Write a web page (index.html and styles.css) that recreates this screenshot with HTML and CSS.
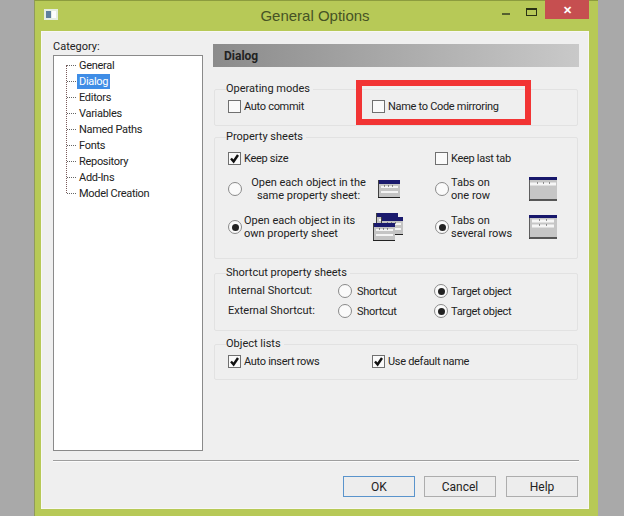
FILE: index.html
```html
<!DOCTYPE html>
<html lang="en">
<head>
    <meta charset="UTF-8">
    <meta name="viewport" content="width=device-width, initial-scale=1.0">
    <title>General Options</title>
    <link rel="stylesheet" href="styles.css">
</head>
<body>
    <svg class="defs" width="0" height="0">
        <symbol id="tick" viewBox="0 0 13 13">
            <path d="M3 6.5l2.6 3L10 3" fill="none" stroke="#111" stroke-width="2.4"/>
        </symbol>
        <symbol id="sheet" viewBox="0 0 22 18">
            <rect x="0" y="0" width="22" height="18" fill="#404040"/>
            <rect x="1" y="0" width="21" height="17" fill="#c4c4c4"/>
            <rect x="1" y="0" width="21" height="4" fill="#1a1a6e"/>
            <path d="M3 7h17M3 12h17" stroke="#f4f4f4" stroke-width="2"/>
            <path d="M6 6h1M10 6h1M14 6h1" stroke="#333"/>
            <path d="M0 17.5h22" stroke="#222"/>
        </symbol>
        <symbol id="tabs-one" viewBox="0 0 28 24">
            <rect x="0" y="0" width="28" height="24" fill="#c6c6c6"/>
            <rect x="0" y="0" width="28" height="3" fill="#17176b"/>
            <path d="M1 7h26" stroke="#f6f6f6" stroke-width="3"/>
            <path d="M8 6h1M14 6h1M20 6h1" stroke="#333"/>
            <path d="M0 3v21h28" fill="none" stroke="#333" stroke-width="1.4"/>
            <path d="M0 22.5h28" stroke="#555"/>
        </symbol>
        <symbol id="tabs-rows" viewBox="0 0 28 24">
            <rect x="0" y="0" width="28" height="24" fill="#c6c6c6"/>
            <rect x="0" y="0" width="28" height="3" fill="#17176b"/>
            <path d="M3 6h22M3 11h22" stroke="#f6f6f6" stroke-width="3"/>
            <path d="M10 5h1M17 5h1M10 10h1M17 10h1" stroke="#333"/>
            <path d="M0 3v21h28" fill="none" stroke="#333" stroke-width="1.4"/>
            <path d="M0 22.5h28" stroke="#555"/>
        </symbol>
    </svg>

    <div class="window">
        <div class="titlebar">
            <svg class="app-icon" width="14" height="11" viewBox="0 0 14 11">
                <rect width="14" height="11" fill="#e6eee0"/>
                <rect x="2" y="2" width="5" height="7" fill="#5e7f9c"/>
                <rect x="8" y="2" width="4" height="7" fill="#fdfdfd"/>
            </svg>
            <div class="title">General Options</div>
            <div class="win-btns">
                <span class="win-min"></span>
                <span class="win-max"></span>
                <span class="win-close">&#10005;</span>
            </div>
        </div>

        <div class="client">
            <div class="columns">
                <div class="left-col">
                    <div class="cat-label">Category:</div>
                    <ul class="tree">
                        <li>General</li>
                        <li class="selected"><span>Dialog</span></li>
                        <li>Editors</li>
                        <li>Variables</li>
                        <li>Named Paths</li>
                        <li>Fonts</li>
                        <li>Repository</li>
                        <li>Add-Ins</li>
                        <li>Model Creation</li>
                    </ul>
                </div>

                <div class="right-col">
                    <div class="page-head">Dialog</div>

                    <fieldset class="group group-modes">
                        <legend>Operating modes</legend>
                        <div class="pair-row">
                            <label class="opt"><span class="check"></span>Auto commit</label>
                            <label class="opt"><span class="check"></span>Name to Code mirroring</label>
                        </div>
                        <div class="highlight"></div>
                    </fieldset>

                    <fieldset class="group group-sheets">
                        <legend>Property sheets</legend>
                        <div class="sheets-grid">
                            <label class="opt"><span class="check"><svg width="13" height="13"><use href="#tick"/></svg></span>Keep size</label>
                            <label class="opt"><span class="check"></span>Keep last tab</label>

                            <div class="sheet-row row-same">
                                <span class="radio"></span>
                                <span class="sheet-text centered">Open each object in the<br>same property sheet:</span>
                                <svg class="ic-same" width="22" height="18"><use href="#sheet"/></svg>
                            </div>
                            <div class="sheet-row tab-row">
                                <span class="radio"></span>
                                <span class="sheet-text">Tabs on<br>one row</span>
                                <svg class="ic-tab" width="28" height="24"><use href="#tabs-one"/></svg>
                            </div>

                            <div class="sheet-row row-own">
                                <span class="radio on"></span>
                                <span class="sheet-text">Open each object in its<br>own property sheet</span>
                                <span class="ic-stack">
                                    <svg width="22" height="18"><use href="#sheet"/></svg>
                                    <svg width="22" height="18"><use href="#sheet"/></svg>
                                    <svg width="22" height="18"><use href="#sheet"/></svg>
                                </span>
                            </div>
                            <div class="sheet-row tab-row">
                                <span class="radio on"></span>
                                <span class="sheet-text">Tabs on<br>several rows</span>
                                <svg class="ic-tab" width="28" height="24"><use href="#tabs-rows"/></svg>
                            </div>
                        </div>
                    </fieldset>

                    <fieldset class="group group-shortcut">
                        <legend>Shortcut property sheets</legend>
                        <div class="shortcut-grid">
                            <span class="sc-label">Internal Shortcut:</span>
                            <label class="opt"><span class="radio"></span>Shortcut</label>
                            <label class="opt"><span class="radio on"></span>Target object</label>
                            <span class="sc-label">External Shortcut:</span>
                            <label class="opt"><span class="radio"></span>Shortcut</label>
                            <label class="opt"><span class="radio on"></span>Target object</label>
                        </div>
                    </fieldset>

                    <fieldset class="group group-lists">
                        <legend>Object lists</legend>
                        <div class="pair-row">
                            <label class="opt"><span class="check"><svg width="13" height="13"><use href="#tick"/></svg></span>Auto insert rows</label>
                            <label class="opt"><span class="check"><svg width="13" height="13"><use href="#tick"/></svg></span>Use default name</label>
                        </div>
                    </fieldset>
                </div>
            </div>

            <div class="separator"></div>

            <div class="buttons">
                <button class="btn default">OK</button>
                <button class="btn">Cancel</button>
                <button class="btn btn-help">Help</button>
            </div>
        </div>
    </div>
</body>
</html>
```

FILE: styles.css
```css
html, body {
    height: 100%;
}
body {
    margin: 0;
    background-color: #a9a9a9;
    font-family: Roboto, "Liberation Sans", Arial, sans-serif;
    font-size: 11px;
    color: #222;
    overflow: hidden;
}
.defs {
    position: absolute;
}
.window {
    box-sizing: border-box;
    width: 564px;
    height: 516px;
    margin-left: 34px;
    background-color: #b7c957;
    border-left: 1px solid #8f9a5c;
    border-top: 1px solid #8c9c3e;
    padding: 0 9px 7px 6px;
    display: flex;
    flex-direction: column;
}
.titlebar {
    height: 30px;
    flex: none;
    display: flex;
    position: relative;
}
.app-icon {
    margin: 8px 0 0 3px;
}
.title {
    position: absolute;
    left: 0;
    right: 0;
    top: 6px;
    text-align: center;
    font-family: "Liberation Sans", Arial, sans-serif;
    font-size: 15px;
    color: #465325;
}
.win-btns {
    margin-left: auto;
    display: flex;
}
.win-min {
    width: 8px;
    height: 2px;
    margin: 12px 0 0 0;
    background-color: #55602f;
}
.win-max {
    box-sizing: border-box;
    width: 11px;
    height: 8px;
    margin: 7px 0 0 16px;
    border: 1px solid #2b3314;
    border-top-width: 2px;
}
.win-close {
    width: 44px;
    height: 19px;
    margin-left: 8px;
    margin-top: -1px;
    background-color: #c64f50;
    color: #fff;
    font-size: 11px;
    font-weight: bold;
    line-height: 22px;
    text-align: center;
}
.client {
    flex: 1;
    background-color: #efefef;
    box-shadow: inset 0 0 0 1px #f7f7f4;
    padding: 13px 10px 0 12px;
    display: flex;
    flex-direction: column;
}
.columns {
    display: flex;
    gap: 10px;
}
.left-col {
    width: 150px;
}
.cat-label {
    height: 11px;
    line-height: 6px;
}
.tree {
    box-sizing: border-box;
    position: relative;
    height: 396px;
    margin: 0;
    padding: 2px 0 0 25px;
    list-style: none;
    background-color: #fff;
    border: 1px solid #8a8a8a;
}
.tree::before {
    content: "";
    position: absolute;
    left: 12px;
    top: 9px;
    height: 128px;
    border-left: 1px dotted #7a5a5a;
}
.tree li {
    position: relative;
    height: 16px;
    line-height: 15px;
    letter-spacing: -0.3px;
}
.tree li::before {
    content: "";
    position: absolute;
    left: -12px;
    top: 7px;
    width: 9px;
    border-top: 1px dotted #666;
}
.tree .selected span {
    display: inline-block;
    margin-left: -2px;
    padding: 0 2px;
    background-color: #3f8de6;
    color: #fff;
}
.right-col {
    width: 366px;
    position: relative;
}
.page-head {
    height: 23px;
    line-height: 24px;
    padding-left: 11px;
    font-size: 12px;
    font-weight: bold;
    color: #222;
    background: linear-gradient(to right, #8b8b8b, #c9c9c9);
}
.group {
    box-sizing: border-box;
    margin: 0 1px;
    padding: 0 0 0 13px;
    min-width: 0;
    border: 1px solid #e2e2e2;
    border-radius: 2px;
}
.group legend {
    padding: 0 3px 0 0;
    margin-left: -2px;
    line-height: 14px;
}
.group-modes {
    position: relative;
    height: 44px;
    margin-top: 15px;
}
.group-sheets {
    height: 129px;
    margin-top: 4px;
}
.group-shortcut {
    height: 65px;
    margin-top: 7px;
}
.group-lists {
    height: 43px;
    margin-top: 6px;
}
.opt {
    display: flex;
    align-items: center;
    gap: 3px;
    height: 14px;
    align-self: start;
    letter-spacing: -0.3px;
}
.check {
    box-sizing: border-box;
    flex: none;
    width: 13px;
    height: 13px;
    background-color: #fafafa;
    border: 1px solid #707070;
    display: flex;
}
.check svg {
    margin: -1px;
    flex: none;
}
.radio {
    box-sizing: border-box;
    flex: none;
    width: 14px;
    height: 14px;
    border-radius: 50%;
    background-color: #fafafa;
    border: 1px solid #8a8a8a;
    position: relative;
}
.radio.on::after {
    content: "";
    position: absolute;
    left: 2.5px;
    top: 2.5px;
    width: 7px;
    height: 7px;
    border-radius: 50%;
    background-color: #222;
}
.pair-row {
    display: grid;
    grid-template-columns: 144px 1fr;
    padding-top: 3px;
}
.highlight {
    position: absolute;
    left: 141px;
    top: -16px;
    width: 175px;
    height: 45px;
    box-sizing: border-box;
    border: 6px solid #f23434;
}
.sheets-grid {
    display: grid;
    grid-template-columns: 207px 1fr;
    grid-template-rows: 19px 38px 38px;
    padding-top: 7px;
}
.sheet-row {
    display: flex;
    align-items: center;
    line-height: 13px;
}
.row-same .sheet-text {
    margin-left: 9px;
    width: 115px;
}
.row-own .sheet-text {
    margin-left: 2px;
    width: 129px;
}
.centered {
    text-align: center;
}
.ic-same {
    margin-left: 12px;
    margin-bottom: 1px;
}
.ic-stack {
    position: relative;
    width: 30px;
    height: 28px;
}
.ic-stack svg {
    position: absolute;
}
.ic-stack svg:nth-child(1) {
    left: 3px;
    top: 0;
}
.ic-stack svg:nth-child(2) {
    left: 8px;
    top: 4px;
}
.ic-stack svg:nth-child(3) {
    left: 0;
    top: 10px;
}
.tab-row .sheet-text {
    margin-left: 2px;
    width: 78px;
}
.shortcut-grid {
    display: grid;
    grid-template-columns: 110px 96px 1fr;
    grid-auto-rows: 20px;
    align-items: center;
    padding-top: 1px;
}
.shortcut-grid .opt {
    gap: 5px;
    align-self: center;
}
.shortcut-grid .opt:nth-child(3n) {
    gap: 3px;
}
.sc-label {
    position: relative;
    top: -1px;
}
.btn {
    box-sizing: border-box;
    width: 72px;
    height: 21px;
    padding: 0;
    border: 1px solid #adadad;
    background-color: #ededed;
    font: inherit;
    font-size: 12px;
    color: #222;
}
.btn.default {
    border-color: #5a94cc;
}
.btn-help {
    margin-left: 1px;
}
.separator {
    flex: none;
    height: 1px;
    margin-top: 9px;
    background-color: #9f9f9f;
    border-bottom: 1px solid #fbfbfb;
}
.buttons {
    display: flex;
    justify-content: flex-end;
    gap: 9px;
    margin-top: 14px;
    padding-right: 1px;
}
```
